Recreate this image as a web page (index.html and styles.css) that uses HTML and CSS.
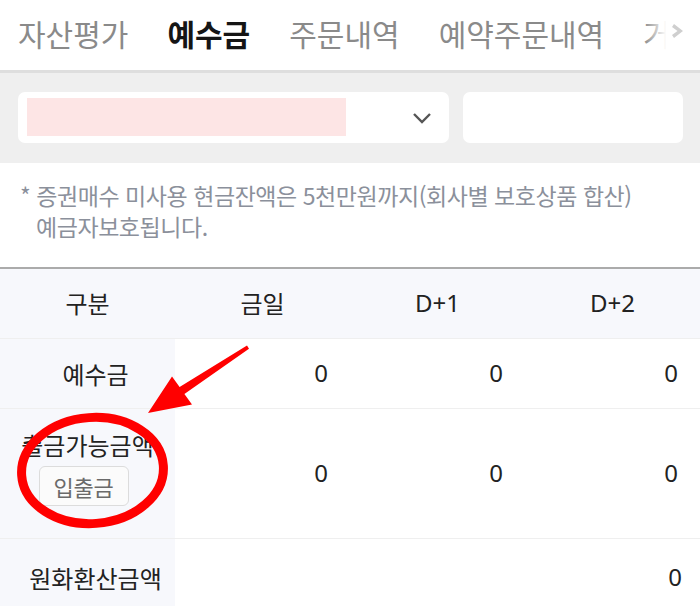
FILE: index.html
```html
<!DOCTYPE html>
<html lang="ko">
<head>
<meta charset="utf-8">
<link rel="stylesheet" href="styles.css">
</head>
<body>
<div class="page">
  <nav class="tabbar">
    <div class="tabs">
      <span class="tab">자산평가</span>
      <span class="tab active">예수금</span>
      <span class="tab">주문내역</span>
      <span class="tab">예약주문내역</span>
      <span class="tab">거래내역</span>
    </div>
    <div class="tab-fade">
      <svg class="tab-more" width="12" height="14" viewBox="0 0 12 14"><path d="M2 0 L11 7 L2 14 L0 11 L5.5 7 L0 3 Z" fill="#cfcfcf"/></svg>
    </div>
  </nav>

  <section class="filters">
    <div class="select">
      <div class="select-value"></div>
      <svg class="chev" width="20" height="12" viewBox="0 0 20 12"><path d="M2 2 L10 10 L18 2" fill="none" stroke="#555" stroke-width="2.4"/></svg>
    </div>
    <div class="field"></div>
  </section>

  <p class="notice">* 증권매수 미사용 현금잔액은 5천만원까지(회사별 보호상품 합산)<br>예금자보호됩니다.</p>

  <div class="table">
    <div class="row head">
      <div class="cell label">구분</div>
      <div class="cell">금일</div>
      <div class="cell">D+1</div>
      <div class="cell">D+2</div>
    </div>
    <div class="row r1">
      <div class="cell label shift">예수금</div>
      <div class="cell num">0</div>
      <div class="cell num">0</div>
      <div class="cell num">0</div>
    </div>
    <div class="row r2">
      <div class="cell label stack">
        <span>출금가능금액</span>
        <button class="btn">입출금</button>
      </div>
      <div class="cell num">0</div>
      <div class="cell num">0</div>
      <div class="cell num">0</div>
    </div>
    <div class="row r3">
      <div class="cell label shift">원화환산금액</div>
      <div class="cell num wide">0</div>
    </div>
  </div>

  <svg class="marks" width="700" height="606" viewBox="0 0 700 606">
    <polygon points="249,348.8 184.4,394 192,404.5 148,413 172,376.5 179.6,387 247,345.6" fill="#ff0000"/>
    <ellipse cx="92.5" cy="470.5" rx="71" ry="53" fill="none" stroke="#ff0000" stroke-width="9" transform="rotate(-4 92.5 470.5)"/>
  </svg>
</div>
</body>
</html>
```

FILE: styles.css
```css
* { box-sizing: border-box; }
html, body { margin: 0; padding: 0; background: #fff; }
body {
  width: 700px;
  height: 606px;
  overflow: hidden;
  font-family: "Noto Sans", "Noto Sans CJK KR", sans-serif;
  color: #222;
}
.page { position: relative; width: 700px; }

.tabbar {
  position: relative;
  height: 73px;
  border-bottom: 3px solid #dedede;
  overflow: hidden;
}
.tabs {
  display: flex;
  white-space: nowrap;
  height: 70px;
}
.tab {
  flex: none;
  padding: 0 19.5px;
  height: 73px;
  line-height: 66px;
  font-family: "Noto Sans CJK KR", sans-serif;
  font-size: 30px;
  letter-spacing: 0;
  color: #8a8a8a;
}
.tab:first-child { padding-left: 18px; }
.tab.active {
  color: #151515;
  font-weight: 700;
  border-bottom: 3px solid #222;
}
.tab-fade {
  position: absolute;
  top: 0;
  right: 0;
  width: 56px;
  height: 70px;
  background: linear-gradient(to right, rgba(255,255,255,0) 0%, #fff 40%);
  display: flex;
  align-items: center;
  justify-content: flex-end;
  padding-right: 16px;
  padding-bottom: 8px;
}

.filters {
  display: flex;
  gap: 14px;
  background: #efefef;
  padding: 19px 17px 20px 18px;
}
.select, .field {
  height: 51px;
  background: #fff;
  border-radius: 7px;
}
.select {
  width: 431px;
  display: flex;
  align-items: center;
  justify-content: space-between;
  padding: 4px 17px 5px 9px;
}
.select-value {
  width: 319px;
  height: 38px;
  background: #fde5e5;
}
.chev { margin-top: 2px; }
.field { flex: 1; }

.notice {
  margin: 0;
  padding: 17px 10px 25px 36px;
  text-indent: -16px;
  font-family: "Noto Sans CJK KR", sans-serif;
  font-size: 23px;
  line-height: 31px;
  letter-spacing: -0.45px;
  color: #8b909b;
  border-bottom: 2px solid #ababab;
}

.table { font-size: 24px; }
.row {
  display: grid;
  grid-template-columns: repeat(4, 175px);
  border-bottom: 1px solid #efefef;
}
.row.head { height: 70px; background: #f7f8fc; }
.row.r1 { height: 70px; }
.row.r2 { height: 130px; }
.row.r3 { height: 76px; border-bottom: none; }
.cell {
  display: flex;
  align-items: center;
  justify-content: center;
  font-size: 24px;
}
.row.head .cell { padding-bottom: 2px; }
.label {
  background: #f7f8fc;
  font-family: "Noto Sans CJK KR", sans-serif;
  font-size: 24px;
  letter-spacing: 0;
  color: #222;
}
.row.head .label { background: transparent; }
.label.shift { padding-left: 16px; }
.num {
  justify-content: flex-end;
  padding-right: 22px;
  padding-bottom: 2px;
}
.num.wide {
  grid-column: 2 / 5;
  padding-right: 18px;
}
.stack {
  flex-direction: column;
  justify-content: flex-start;
  padding-top: 21px;
  gap: 6px;
}
.stack span { line-height: 30px; }
.btn {
  width: 90px;
  height: 40px;
  margin-right: 8px;
  border: 1.5px solid #dcdcdc;
  border-radius: 6px;
  background: #fbfbfb;
  color: #6a6a6a;
  font-family: "Noto Sans CJK KR", sans-serif;
  font-size: 22px;
  letter-spacing: -0.3px;
  padding: 0;
}

.marks {
  position: absolute;
  top: 0;
  left: 0;
  pointer-events: none;
}
```
